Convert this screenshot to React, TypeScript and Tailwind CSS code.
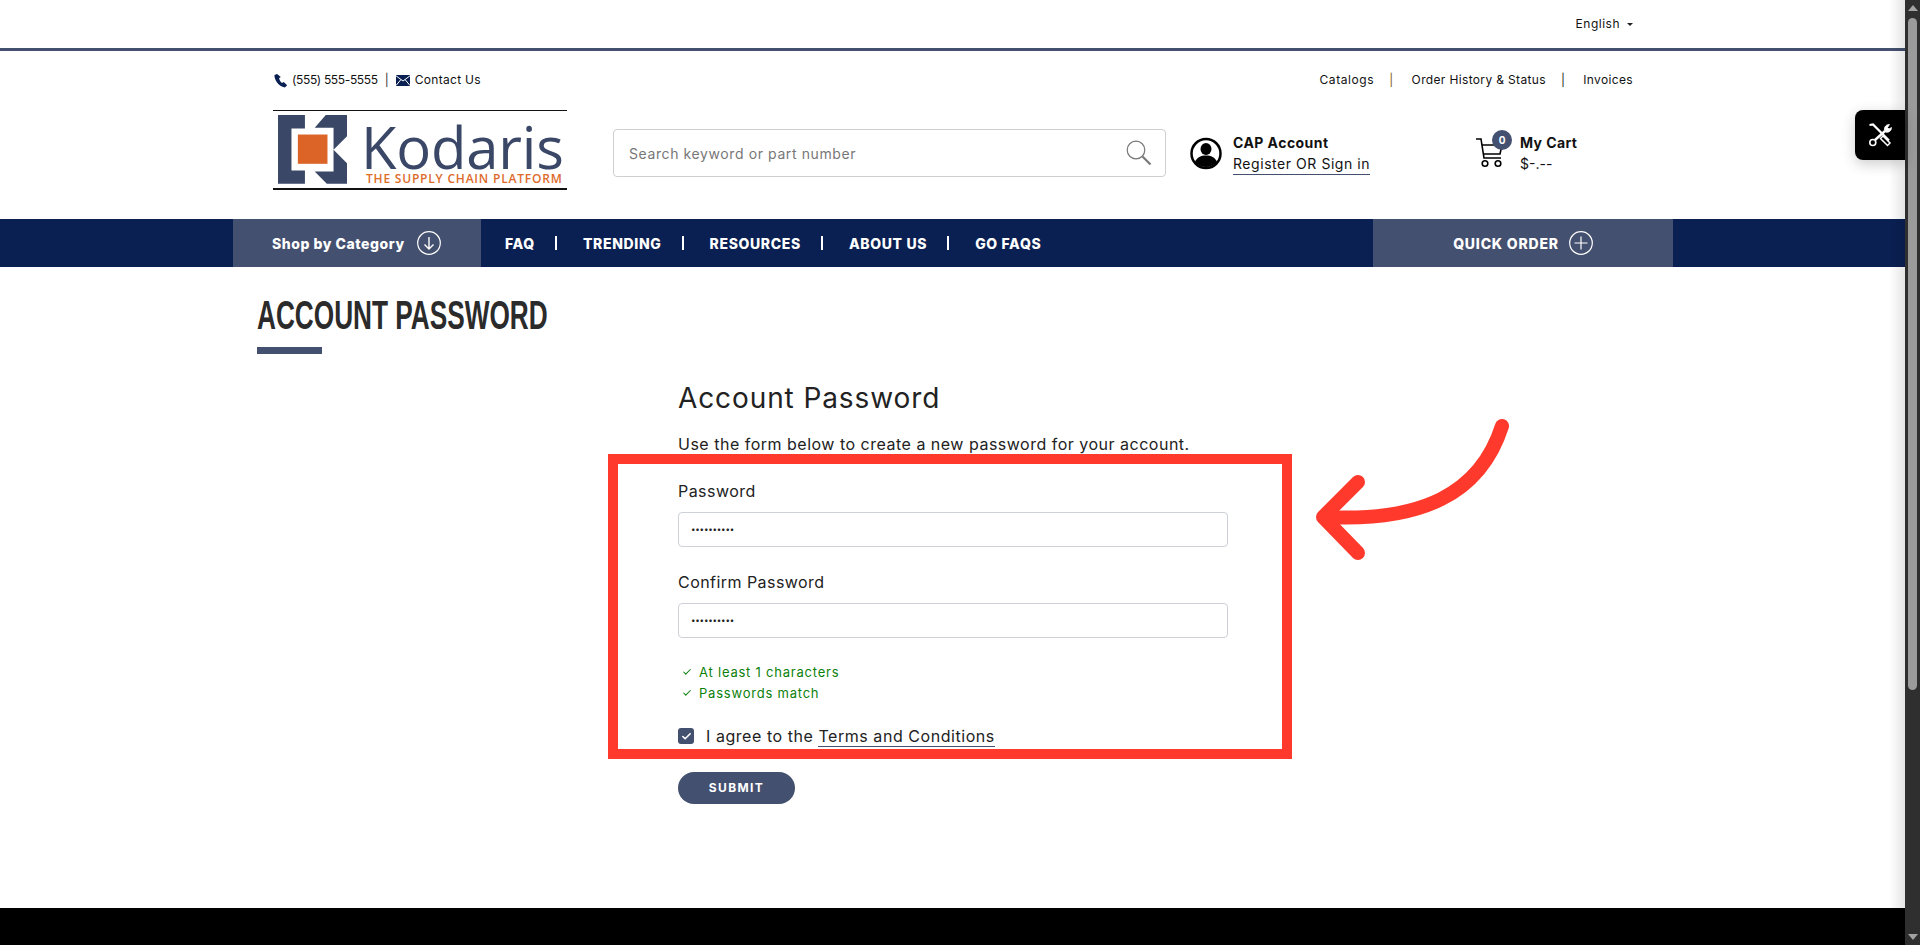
import { Check } from "lucide-react";

const NAV_LINKS = ["FAQ", "TRENDING", "RESOURCES", "ABOUT US", "GO FAQS"];

function LogoMark() {
  return (
    <svg width="69" height="69" viewBox="113 347 205 205" className="shrink-0">
      <path fill="#3a4766" d="M113 347h80v40h-40v125h40v39h-80z" />
      <path fill="#3a4766" d="M255 347h63v63l-40 40 40 40v61h-60l-36-36h56V385h-56z" />
      <rect x="172" y="405" width="88" height="87" fill="#dc6427" />
    </svg>
  );
}

function PhoneIcon() {
  return (
    <svg width="15" height="15" viewBox="0 0 24 24" fill="#0a1f52">
      <path d="M6.6 1.5 2.4 3.2C1.6 9.800 8.500 21.500 19 23.200l3.600-3.700-5.400-5-3 1.500c-2-1.500-4-4.800-4.500-7.500l2.700-2z" />
    </svg>
  );
}

function MailIcon() {
  return (
    <svg width="14" height="11" viewBox="0 0 14 11">
      <rect width="14" height="11" fill="#0a1f52" />
      <path d="M0 .8 7 6l7-5.200M0 10.500 5 4.500M14 10.500 9 4.500" stroke="#fff" strokeWidth="1" fill="none" />
    </svg>
  );
}

function AccountIcon() {
  return (
    <svg width="32" height="33" viewBox="0 0 32 33" className="shrink-0">
      <circle cx="16" cy="16.500" r="14.500" fill="#fff" stroke="#000" strokeWidth="2.500" />
      <ellipse cx="16" cy="12" rx="5.500" ry="6" />
      <path d="M5 25c2-5 6-6.500 11-6.500S25 20 27 25c-3 3.500-7 5-11 5s-8-1.500-11-5z" />
    </svg>
  );
}

function CartIcon() {
  return (
    <svg width="30" height="30" viewBox="0 0 30 30" fill="none" stroke="#000" strokeWidth="1.600" className="shrink-0">
      <path d="M1 1h5l3 19h17" />
      <path d="M7 7h20l-2 9H8.500" />
      <circle cx="10" cy="25.500" r="2.800" />
      <circle cx="23" cy="25.500" r="2.800" />
    </svg>
  );
}

function CircleArrowDown() {
  return (
    <svg width="24" height="24" viewBox="0 0 24 24" fill="none" stroke="#fff" strokeWidth="1.200">
      <circle cx="12" cy="12" r="11.300" />
      <path d="M12 6v12M7.500 13.500 12 18l4.500-4.500" strokeWidth="1.400" />
    </svg>
  );
}

function CirclePlus() {
  return (
    <svg width="24" height="24" viewBox="0 0 24 24" fill="none" stroke="#fff" strokeWidth="1.200">
      <circle cx="12" cy="12" r="11.300" />
      <path d="M12 5.500v13M5.500 12h13" />
    </svg>
  );
}

function ToolsIcon() {
  return (
    <svg width="24" height="24" viewBox="0 0 24 24" fill="none" stroke="#fff">
      <path d="M1.500 2 5 1.500l16 16" strokeWidth="2.200" />
      <path d="M15 13l7 7-2.500 2.500-7-7z" fill="#000" strokeWidth="1.500" />
      <path d="M17 8 7 17" strokeWidth="2.400" />
      <path d="M16.500 7c-.5-3 1.500-5.500 5-5.500l-2 3 1.500 1.500 2.500-1.500c0 3.500-3 5.500-6 4.500z" fill="#fff" strokeWidth="0.800" />
      <circle cx="4.800" cy="19.500" r="3" strokeWidth="1.600" />
    </svg>
  );
}

function PasswordField({ label }: { label: string }) {
  return (
    <div>
      <label className="mt-[24px] block text-[16px] leading-[23px] tracking-[0.45px] text-[#222]">{label}</label>
      <input
        type="password"
        readOnly
        value="1234567890"
        className="mt-[9px] block h-[35px] w-[550px] rounded-[4px] border border-[#cdd0d8] bg-white pr-[12px] pb-[2px] pl-[12px] text-[8px] tracking-[-0.2px] text-[#222] outline-none"
      />
    </div>
  );
}

export default function App() {
  return (
    <div className="flex h-screen overflow-hidden bg-white font-[Inter,sans-serif] text-[#111]">
      <div className="relative flex w-[1905px] shrink-0 flex-col">
        {/* Top bar */}
        <div className="flex h-[48px] items-center justify-end pr-[272px] text-[12px] tracking-[0.5px]">
          <span>English</span>
          <span className="ml-[7px] h-0 w-0 border-x-[3px] border-t-[3px] border-x-transparent border-t-[#222]" />
        </div>
        <div className="h-[3px] bg-[#44506f]" />

        {/* Header */}
        <header className="ml-[273px] w-[1360px] pt-[21px] pb-[29px]">
          <div className="flex h-[16px] items-center justify-between text-[12px]">
            <div className="flex items-center">
              <PhoneIcon />
              <span className="ml-[4px] tracking-[-0.35px]">(555) 555-5555</span>
              <span className="ml-[7px] text-[#333]">|</span>
              <span className="ml-[7px]"><MailIcon /></span>
              <span className="ml-[5px] tracking-[0.3px]">Contact Us</span>
            </div>
            <div className="flex items-center tracking-[0.35px]">
              <span className="tracking-[0.6px]">Catalogs</span>
              <span className="mr-[18px] ml-[15px] text-[#7a5a10]">|</span>
              <span>Order History &amp; Status</span>
              <span className="mr-[18px] ml-[15px] text-[#222]">|</span>
              <span>Invoices</span>
            </div>
          </div>

          <div className="mt-[22px] flex h-[80px] items-center">
            {/* Logo */}
            <div className="flex h-[80px] w-[294px] shrink-0 items-center border-y border-y-[#111] border-b-2 pl-[5px]">
              <LogoMark />
              <div className="mt-[9px] ml-[19px] flex flex-col font-['Open_Sans',sans-serif]">
                <span className="ml-[-5px] text-[58px] leading-[50px] font-medium tracking-[-0.2px] text-[#3a4766]">Kodaris</span>
                <span className="whitespace-nowrap text-[12px] leading-[14px] font-semibold tracking-[0.8px] text-[#dd6b2a]">THE SUPPLY CHAIN PLATFORM</span>
              </div>
            </div>

            {/* Search */}
            <div className="mt-[6px] ml-[46px] flex h-[48px] w-[553px] shrink-0 items-center justify-between rounded-[4px] border border-[#cfcfcf] pr-[13px] pl-[15px]">
              <span className="text-[14px] tracking-[0.6px] text-[#777]">Search keyword or part number</span>
              <svg width="26" height="26" viewBox="0 0 26 26" fill="none" stroke="#777">
                <circle cx="10" cy="10" r="8.800" strokeWidth="1.200" />
                <path d="m16.500 16.500 8 8" strokeWidth="2.200" />
              </svg>
            </div>

            {/* Account */}
            <div className="mt-[6px] ml-[24px] flex w-[285px] shrink-0 items-center">
              <AccountIcon />
              <div className="ml-[11px] text-[14px]">
                <div className="leading-[21px] font-bold tracking-[0.45px]">CAP Account</div>
                <div className="border-b border-[#44506f] leading-[21px] tracking-[0.55px]">Register OR Sign in</div>
              </div>
            </div>

            {/* Cart */}
            <div className="relative mt-[6px] flex items-center">
              <CartIcon />
              <span className="absolute top-[-2px] left-[17px] flex h-[20px] w-[20px] items-center justify-center rounded-full bg-[#44506f] text-[10px] font-bold text-white">0</span>
              <div className="ml-[15px] text-[14px]">
                <div className="leading-[21px] font-bold tracking-[0.4px]">My Cart</div>
                <div className="leading-[21px]">$-.--</div>
              </div>
            </div>
          </div>
        </header>

        {/* Nav */}
        <nav className="flex h-[48px] shrink-0 bg-[#0a1f52] pl-[233px] text-white">
          <div className="flex w-[248px] items-center bg-[#44506f] pl-[39px]">
            <span className="text-[14px] font-extrabold tracking-[0.55px]">Shop by Category</span>
            <span className="ml-[12px]"><CircleArrowDown /></span>
          </div>
          <div className="flex w-[892px] items-center pl-[24px] text-[14px] font-extrabold tracking-[0.65px]">
            {NAV_LINKS.map((link, i) => (
              <div key={link} className="flex items-center">
                {i > 0 && <span className="mr-[26px] ml-[20px] h-[14px] w-[2px] bg-white" />}
                <span>{link}</span>
              </div>
            ))}
          </div>
          <div className="flex w-[300px] items-center justify-center bg-[#44506f]">
            <span className="text-[14px] font-extrabold tracking-[0.8px]">QUICK ORDER</span>
            <span className="ml-[10px]"><CirclePlus /></span>
          </div>
        </nav>

        {/* Content */}
        <main className="flex-1">
          <div className="ml-[257px]">
            <h1 className="mt-[28px] origin-left scale-x-[0.655] whitespace-nowrap font-['Liberation_Sans',sans-serif] text-[40px] leading-[40px] font-bold text-[#2b2b2b]">ACCOUNT PASSWORD</h1>
            <div className="mt-[12px] h-[7px] w-[65px] bg-[#44506f]" />
          </div>

          <div className="ml-[678px] w-[550px]">
            <h2 className="mt-[24px] text-[28px] leading-[40px] tracking-[0.9px] text-[#222]">Account Password</h2>
            <p className="mt-[14px] text-[16px] leading-[24px] tracking-[0.5px] text-[#222]">Use the form below to create a new password for your account.</p>
            <PasswordField label="Password" />
            <PasswordField label="Confirm Password" />

            <div className="mt-[24px] text-[13px] leading-[20px] tracking-[0.78px] text-[#0c7f0c]">
              <div className="flex items-center">
                <Check size={10} strokeWidth={2.500} className="ml-[4px]" />
                <span className="ml-[7px]">At least 1 characters</span>
              </div>
              <div className="mt-px flex items-center">
                <Check size={10} strokeWidth={2.500} className="ml-[4px]" />
                <span className="ml-[7px]">Passwords match</span>
              </div>
            </div>

            <div className="mt-[21px] flex h-[24px] items-center text-[16px] tracking-[0.55px] text-[#222]">
              <span className="flex h-[16px] w-[16px] items-center justify-center rounded-[3px] bg-[#44506f]">
                <Check size={11} strokeWidth={3.500} color="#fff" />
              </span>
              <span className="ml-[12px]">I agree to the</span>
              <span className="ml-[5px] border-b border-[#44506f] leading-[20px]">Terms and Conditions</span>
            </div>

            <button className="mt-[24px] h-[32px] w-[117px] rounded-full bg-[#44506f] text-[12px] font-bold tracking-[1.400px] text-white">SUBMIT</button>
          </div>
        </main>

        <footer className="h-[37px] shrink-0 bg-black" />

        {/* Annotation */}
        <div className="pointer-events-none absolute top-[454px] left-[608px] h-[305px] w-[684px] border-[10px] border-[#ff3a2d]" />
        <svg className="pointer-events-none absolute top-[400px] left-[1300px]" width="240" height="180" viewBox="1300 400 240 180" fill="none" stroke="#ff3a2d" strokeWidth="14" strokeLinecap="round" strokeLinejoin="round">
          <path d="M1502 426C1480 495 1420 522 1325 517" />
          <path d="M1358 482l-35 35 35 36" />
        </svg>

        {/* Tools tab */}
        <div className="absolute top-[110px] right-0 flex h-[50px] w-[50px] items-center justify-center rounded-l-[8px] bg-black shadow-[0_4px_14px_rgba(0,0,0,0.2)]">
          <ToolsIcon />
        </div>
        <div className="pointer-events-none absolute inset-y-0 right-0 w-[16px] bg-gradient-to-r from-transparent to-black/10" />
      </div>

      {/* Scrollbar */}
      <div className="flex w-[15px] shrink-0 flex-col items-center bg-[#2f2f2f] pt-[5px] pb-[5px]">
        <span className="h-0 w-0 border-x-[5px] border-b-[6px] border-x-transparent border-b-[#a3a3a3]" />
        <div className="mt-[7px] h-[672px] w-[9px] rounded-full bg-[#9b9b9b]" />
        <span className="mt-auto h-0 w-0 border-x-[5px] border-t-[6px] border-x-transparent border-t-[#a3a3a3]" />
      </div>
    </div>
  );
}
